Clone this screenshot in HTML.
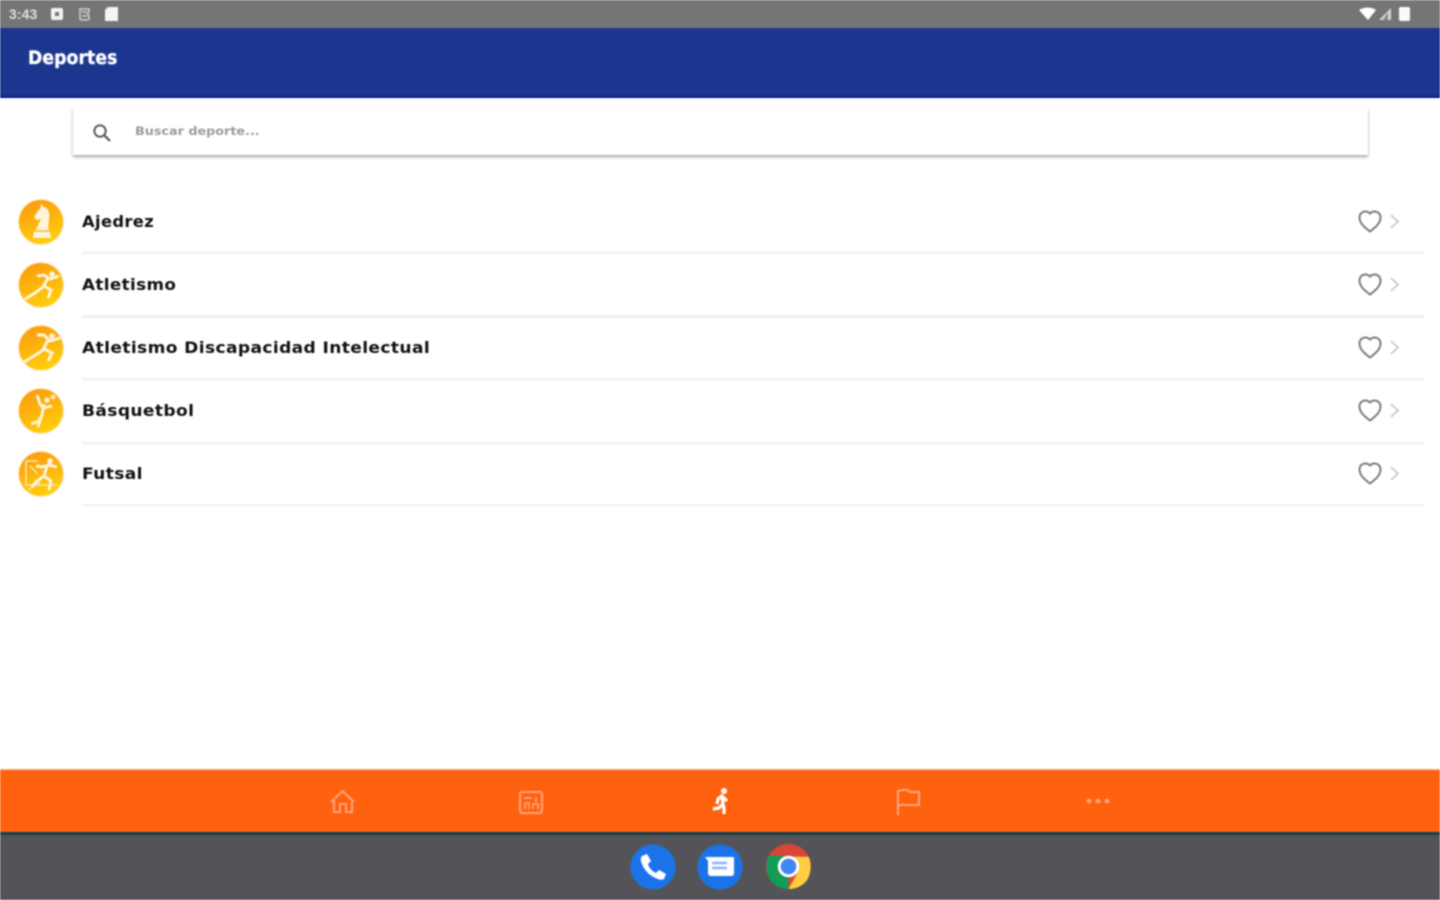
<!DOCTYPE html>
<html lang="es"><head><meta charset="utf-8"><title>Deportes</title>
<style>
html,body{margin:0;padding:0;width:1440px;height:900px;overflow:hidden;background:#fff;font-family:"DejaVu Sans","Liberation Sans",sans-serif}
#p{position:absolute;left:0;top:0;width:1440px;height:900px;filter:blur(.8px)}
.a{position:absolute}
.st{left:0;top:0;width:1440px;height:28px;background:#757575}
.hd{left:0;top:28px;width:1440px;height:68px;background:#1c368f;border-bottom:2px solid #051a85;box-sizing:content-box}
.ti{left:28px;top:49px;font:bold 18.500px/20px "DejaVu Sans",sans-serif;color:#fff;letter-spacing:.1px;transform-origin:0 0;transform:scaleX(.93);text-shadow:0 0 1px #fff}
.sb{left:73px;top:108px;width:1295px;height:47px;background:#fff;box-shadow:0 2px 3px rgba(0,0,0,.35)}
.ph{left:135px;top:124px;font:bold 11.500px/14px "DejaVu Sans",sans-serif;color:#9a9a9a;white-space:nowrap;transform-origin:0 0;transform:scaleX(1.11)}
.lb{left:82px;font:bold 16px/20px "DejaVu Sans",sans-serif;color:#111;white-space:nowrap;letter-spacing:.35px;transform-origin:0 0;transform:scaleX(1.067)}
.ln{left:82px;width:1342px;height:2px;background:#efefef}
.ci{left:19px;width:44px;height:44px;border-radius:50%;background:linear-gradient(160deg,#fb960f,#ffd60a);box-shadow:0 0 0 1px #ffe2b8}
.nav{left:0;top:769px;width:1440px;height:63px;background:#ff620f;border-top:1px solid #ffb08a;box-sizing:border-box}
.nl{left:0;top:832px;width:1440px;height:3px;background:#123f4e}
.dock{left:0;top:835px;width:1440px;height:65px;background:#545458}
svg{position:absolute;overflow:visible}
</style></head><body><div id="p">
<div class="a st"></div>
<div class="a" style="left:9px;top:6px;font:bold 14px/16px 'Liberation Sans',sans-serif;color:#e0e0e0;letter-spacing:.1px">3:43</div>
<svg style="left:0;top:0" width="130" height="28"><rect x="51" y="8" width="12" height="12" rx="2" fill="#f2f2f2"/><rect x="55" y="12" width="4" height="4" fill="#777"/><path d="M80 9h9v3l-1.500 2 1.500 2v3l-2 1h-5l-2-1zM82 12h5M82 16h5" fill="none" stroke="#d0d0d0" stroke-width="1.500"/><path d="M108 7h10v14h-13v-11z" fill="#f5f5f5"/></svg>
<svg style="left:1350px;top:0" width="70" height="28"><path d="M9 10q9-5 17 0l-8 10z" fill="#fff"/><path d="M41 8v12H29z" fill="#d5d5d5"/><path d="M38 12v8h-5z" fill="#8a8a8a"/><rect x="49" y="7" width="11" height="14" rx="2" fill="#fafafa"/></svg>
<div class="a hd"></div>
<div class="a ti">Deportes</div>
<div class="a sb"></div>
<svg style="left:92px;top:123px" width="20" height="20"><circle cx="8" cy="8" r="5.700" fill="none" stroke="#555" stroke-width="1.900"/><path d="M12 12l6 6" stroke="#555" stroke-width="2.200"/></svg>
<div class="a ph">Buscar deporte...</div>

<div class="a ci" style="top:200px"></div>
<svg style="left:19px;top:200px" width="44" height="44"><path d="M22 4l3 3c5 2 6 6 5 13l-1 8 2 3 1 7H14l1-7 3-3c1-4 3-6 4-9l-4 1-3-3 4-6c2-2 3-4 3-9z" fill="#fff4da"/><path d="M15 31h16" stroke="#f5b63a" stroke-width="1.500"/></svg>
<div class="a lb" style="top:212px;transform:scaleX(1.02)">Ajedrez</div><div class="a ln" style="top:252px"></div>

<div class="a ci" style="top:263px"></div>
<svg style="left:19px;top:263px" width="44" height="44"><circle cx="33" cy="11" r="2.800" fill="#fff4dc"/><path d="M40 13L31 16 25 12 18 13M29 15l-5 9-8 6-10 6M25 23l7 4-3 8" fill="none" stroke="#fff4dc" stroke-width="3"/></svg>
<div class="a lb" style="top:275px;transform:scaleX(1.05)">Atletismo</div><div class="a ln" style="top:315px;height:3px"></div>

<div class="a ci" style="top:326px"></div>
<svg style="left:19px;top:326px" width="44" height="44"><circle cx="33" cy="10" r="2.800" fill="#fff4dc"/><path d="M41 12L31 15 25 9 18 9M29 14l-5 10-9 6-10 6M25 23l8 4-4 8" fill="none" stroke="#fff4dc" stroke-width="3"/></svg>
<div class="a lb" style="top:338px">Atletismo Discapacidad Intelectual</div><div class="a ln" style="top:378px"></div>

<div class="a ci" style="top:389px"></div>
<svg style="left:19px;top:389px" width="44" height="44"><circle cx="28" cy="11" r="2.600" fill="#fff4dc"/><path d="M18 6l3 9 3 4 9-2M25 15l-2 11-3 6-8 3M23 26l-4 12" fill="none" stroke="#fff4dc" stroke-width="2.800"/><circle cx="34" cy="8" r="2.500" fill="#ffeab0"/></svg>
<div class="a lb" style="top:401px">Básquetbol</div><div class="a ln" style="top:442px"></div>

<div class="a ci" style="top:452px"></div>
<svg style="left:19px;top:452px" width="44" height="44"><path d="M7 9h12M7 9v24h32M11 14l8 8M9 38l12-8" fill="none" stroke="#ffe7b0" stroke-width="1.500"/><circle cx="31" cy="9" r="2.800" fill="#fff4dc"/><path d="M38 15l-8-2-7 2-6-1M28 14l-3 10-8 6-4 5M25 24l7 5-2 9" fill="none" stroke="#fff4dc" stroke-width="3"/></svg>
<div class="a lb" style="top:464px">Futsal</div><div class="a ln" style="top:504px"></div>

<svg style="left:1358px;top:210px" width="45" height="24"><path d="M12 21.500C6 17 1.500 13 1.500 7.500 1.500 3.500 4.500 1.500 7.500 1.500c2 0 3.500 1 4.500 2 1-1 2.500-2 4.500-2 3 0 6 2 6 6 0 5.500-4.500 9.500-10.500 14z" fill="none" stroke="#7c7c7c" stroke-width="2"/><path d="M33 5l7 6.500-7 6.500" fill="none" stroke="#c8c8c8" stroke-width="1.800"/></svg>
<svg style="left:1358px;top:273px" width="45" height="24"><path d="M12 21.500C6 17 1.500 13 1.500 7.500 1.500 3.500 4.500 1.500 7.500 1.500c2 0 3.500 1 4.500 2 1-1 2.500-2 4.500-2 3 0 6 2 6 6 0 5.500-4.500 9.500-10.500 14z" fill="none" stroke="#7c7c7c" stroke-width="2"/><path d="M33 5l7 6.500-7 6.500" fill="none" stroke="#c8c8c8" stroke-width="1.800"/></svg>
<svg style="left:1358px;top:336px" width="45" height="24"><path d="M12 21.500C6 17 1.500 13 1.500 7.500 1.500 3.500 4.500 1.500 7.500 1.500c2 0 3.500 1 4.500 2 1-1 2.500-2 4.500-2 3 0 6 2 6 6 0 5.500-4.500 9.500-10.500 14z" fill="none" stroke="#7c7c7c" stroke-width="2"/><path d="M33 5l7 6.500-7 6.500" fill="none" stroke="#c8c8c8" stroke-width="1.800"/></svg>
<svg style="left:1358px;top:399px" width="45" height="24"><path d="M12 21.500C6 17 1.500 13 1.500 7.500 1.500 3.500 4.500 1.500 7.500 1.500c2 0 3.500 1 4.500 2 1-1 2.500-2 4.500-2 3 0 6 2 6 6 0 5.500-4.500 9.500-10.500 14z" fill="none" stroke="#7c7c7c" stroke-width="2"/><path d="M33 5l7 6.500-7 6.500" fill="none" stroke="#c8c8c8" stroke-width="1.800"/></svg>
<svg style="left:1358px;top:462px" width="45" height="24"><path d="M12 21.500C6 17 1.500 13 1.500 7.500 1.500 3.500 4.500 1.500 7.500 1.500c2 0 3.500 1 4.500 2 1-1 2.500-2 4.500-2 3 0 6 2 6 6 0 5.500-4.500 9.500-10.500 14z" fill="none" stroke="#7c7c7c" stroke-width="2"/><path d="M33 5l7 6.500-7 6.500" fill="none" stroke="#c8c8c8" stroke-width="1.800"/></svg>

<div class="a nav"></div>
<div class="a nl"></div>
<svg style="left:330px;top:789px" width="26" height="26" fill="none" stroke="#ffa37a" stroke-width="2"><path d="M1 13L12.500 2 24 13M4 11v12h6v-8h6v8h6V11"/></svg>
<svg style="left:518px;top:790px" width="26" height="26" fill="none" stroke="#ffa37a" stroke-width="2"><rect x="2" y="2" width="22" height="21" rx="2"/><path d="M6 8h8M18 7v5M7 19v-6h4v6M15 19v-5h5v5" stroke-width="1.800"/></svg>
<svg style="left:708px;top:786px" width="26" height="28"><circle cx="16" cy="5" r="3" fill="#fff"/><path d="M15 9l-5 4-1 5M14 10l1 8-4 4-6 1M15 18l1 4v6M15 11l4 4" fill="none" stroke="#fff" stroke-width="3.200"/></svg>
<svg style="left:896px;top:788px" width="26" height="28" fill="none" stroke="#ffa37a" stroke-width="2"><path d="M2 27V3q10-3 12 1h9v13H9q-4-1-7 1"/></svg>
<svg style="left:1086px;top:797px" width="26" height="8" fill="#ffa680"><circle cx="3" cy="4" r="2.400"/><circle cx="12" cy="4" r="2.400"/><circle cx="21" cy="4" r="2.400"/></svg>

<div class="a dock"></div>
<svg style="left:630px;top:844px" width="46" height="46"><circle cx="23" cy="23" r="22.500" fill="#1a73e8"/><path d="M12 12l5-2 4 7-3 3c1 4 4 7 8 9l3-3 7 4-2 5c-2 1-4 1-6 0-9-3-15-10-17-18-.5-2 0-4 1-5z" fill="#fff"/></svg>
<svg style="left:697px;top:844px" width="46" height="46"><circle cx="23" cy="23" r="22.500" fill="#1a73e8"/><path d="M8 13h28c1 0 1 1 1 1v15q0 3-3 3H14q-3 0-3-3V17z" fill="#fff"/><path d="M15 19h15M15 24h15" stroke="#8ab4f8" stroke-width="2.500"/></svg>
<svg style="left:765px;top:843px" width="47" height="47" viewBox="0 0 48 48"><circle cx="24" cy="24" r="23" fill="#db4437"/><path d="M24 24L4 35.500C8 43 15.500 47 24 47z" fill="#0f9d58"/><path d="M24 13L4 13 C1 19 .500 29 4 35.500L14 29z" fill="#0f9d58"/><path d="M24 14h20.500C48 22 47 33 42 39 37 45 30 47 24 47l10-18z" fill="#ffcd40"/><circle cx="24" cy="24" r="11" fill="#fff"/><circle cx="24" cy="24" r="8" fill="#4285f4"/></svg>
</div></body></html>
